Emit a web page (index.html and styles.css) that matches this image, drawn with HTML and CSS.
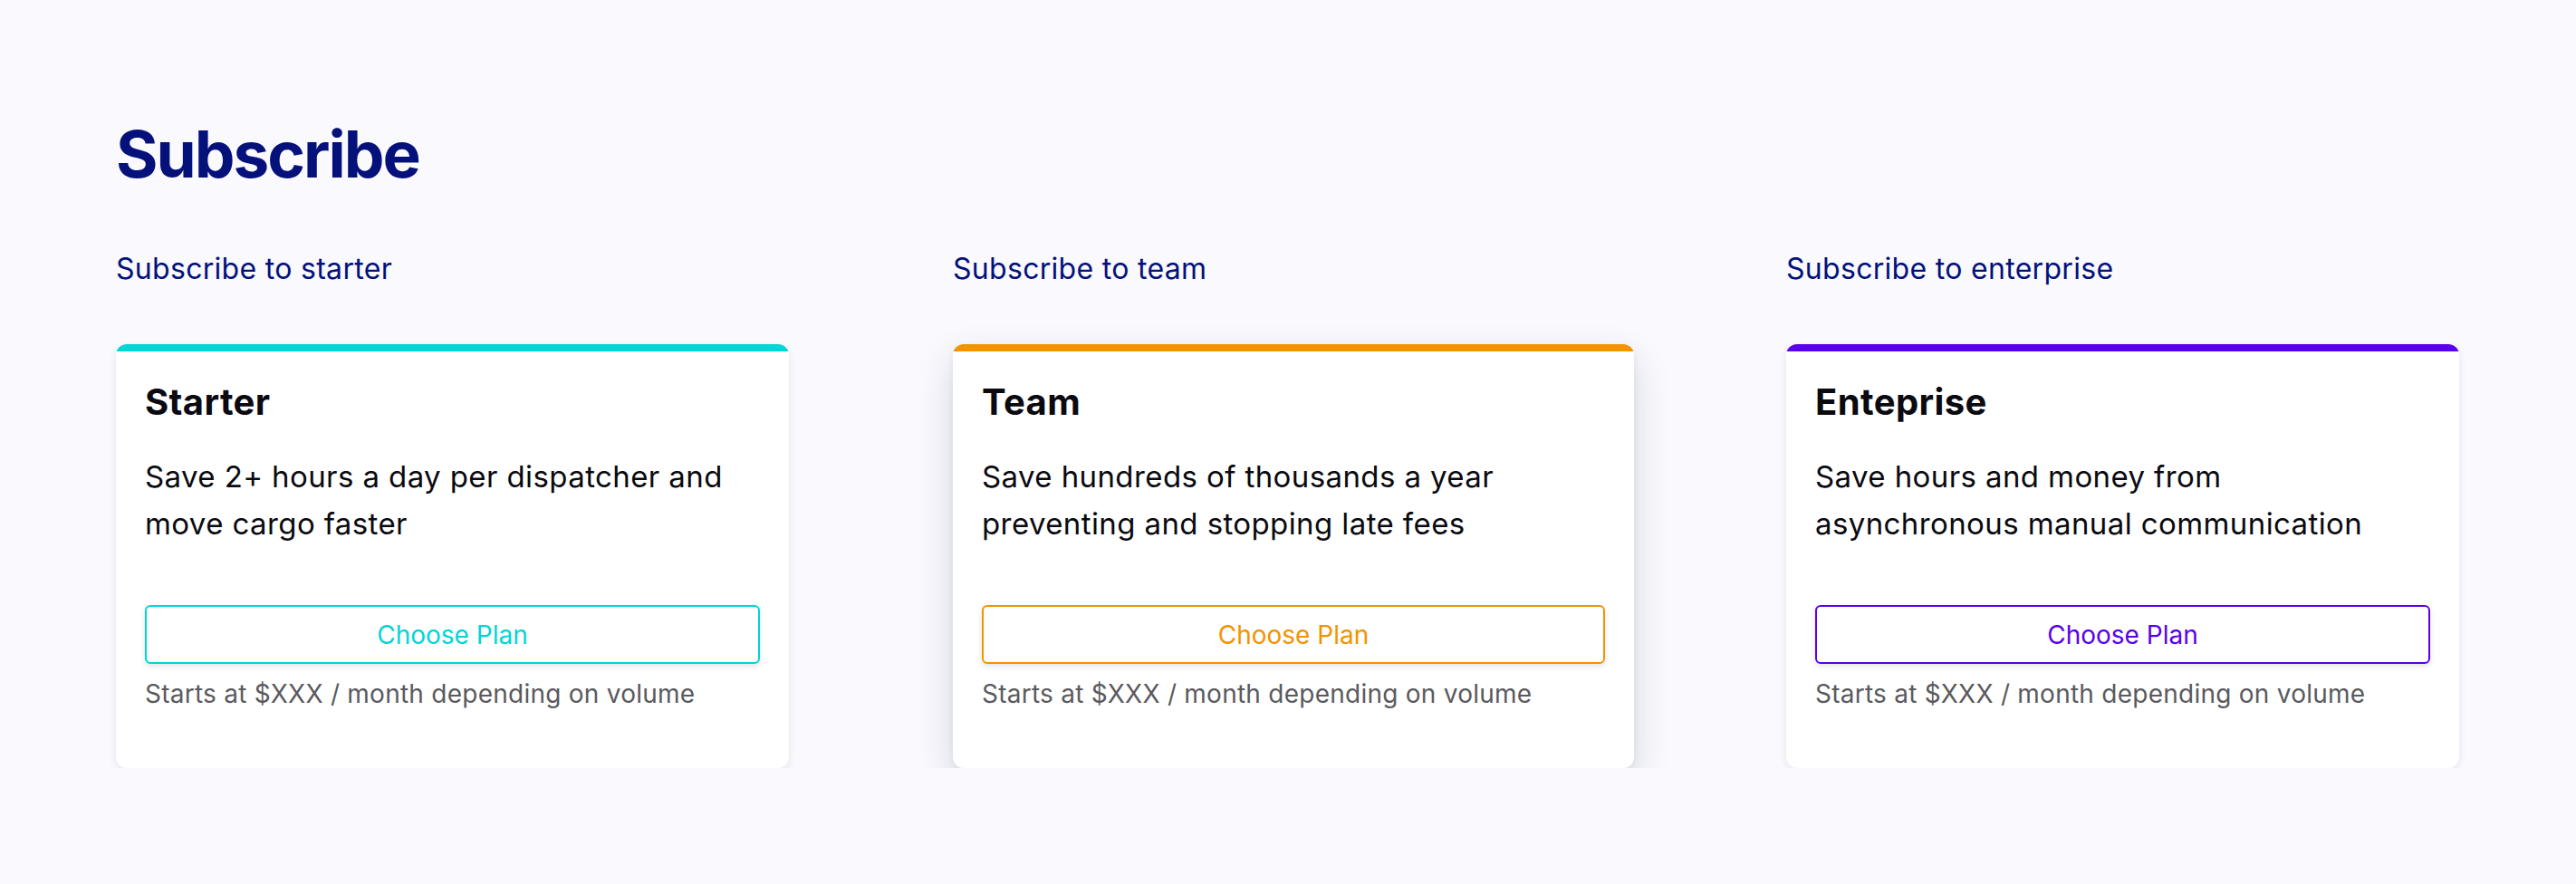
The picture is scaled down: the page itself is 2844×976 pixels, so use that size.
FILE: index.html
```html
<!DOCTYPE html>
<html lang="en">
<head>
<meta charset="utf-8">
<title>Subscribe</title>
<link rel="stylesheet" href="styles.css">
</head>
<body>
<main class="page">
  <h1 class="title">Subscribe</h1>
  <div class="plans">
    <section class="plan plan-starter">
      <h2 class="plan-label">Subscribe to starter</h2>
      <div class="card">
        <div class="card-bar"></div>
        <div class="card-body">
          <h3 class="card-title">Starter</h3>
          <p class="card-text">Save 2+ hours a day per dispatcher and move cargo faster</p>
          <button class="card-btn">Choose Plan</button>
          <p class="card-note">Starts at $XXX / month depending on volume</p>
        </div>
      </div>
    </section>
    <section class="plan plan-team">
      <h2 class="plan-label">Subscribe to team</h2>
      <div class="card card-raised">
        <div class="card-bar"></div>
        <div class="card-body">
          <h3 class="card-title">Team</h3>
          <p class="card-text">Save hundreds of thousands a year preventing and stopping late fees</p>
          <button class="card-btn">Choose Plan</button>
          <p class="card-note">Starts at $XXX / month depending on volume</p>
        </div>
      </div>
    </section>
    <section class="plan plan-enterprise">
      <h2 class="plan-label">Subscribe to enterprise</h2>
      <div class="card">
        <div class="card-bar"></div>
        <div class="card-body">
          <h3 class="card-title">Enteprise</h3>
          <p class="card-text">Save hours and money from asynchronous manual communication</p>
          <button class="card-btn">Choose Plan</button>
          <p class="card-note">Starts at $XXX / month depending on volume</p>
        </div>
      </div>
    </section>
  </div>
</main>
</body>
</html>
```

FILE: styles.css
```css
* { box-sizing: border-box; }

html, body {
  margin: 0;
  padding: 0;
  background: #f9f9fe;
  font-family: "Inter", "Noto Sans", "Liberation Sans", sans-serif;
}

.page {
  padding: 127px 0 0 128px;
}

.title {
  margin: 0;
  font-size: 71px;
  line-height: 86px;
  font-weight: 700;
  color: #04117a;
  letter-spacing: -2px;
}

.plans {
  display: flex;
  align-items: flex-start;
  margin-top: 66px;
}

.plan { flex: none; }
.plan-starter { width: 743px; }
.plan-team { width: 752px; margin-left: 181px; }
.plan-enterprise { width: 743px; margin-left: 168px; }

.plan-label {
  margin: 0 0 65px;
  font-size: 32px;
  line-height: 36px;
  font-weight: 400;
  color: #04117a;
  letter-spacing: 0.3px;
}

.card {
  --accent: #00d6d6;
  background: #ffffff;
  border-radius: 12px;
  overflow: hidden;
  box-shadow: 0 3px 8px rgba(40, 40, 80, 0.10);
}

.plan-team .card { --accent: #f39300; }
.plan-enterprise .card { --accent: #5a00ee; }

.card-raised {
  box-shadow: 0 16px 40px rgba(40, 40, 80, 0.16), 0 3px 8px rgba(40, 40, 80, 0.06);
}

.card-bar {
  height: 8px;
  background: var(--accent);
}

.card-body {
  padding: 32px 32px 62px;
  display: flex;
  flex-direction: column;
}

.card-title {
  margin: 0;
  font-size: 40px;
  line-height: 48px;
  font-weight: 700;
  color: #0a0a10;
  letter-spacing: 0.4px;
}

.card-text {
  margin: 32px 0 0;
  font-size: 33px;
  line-height: 52px;
  font-weight: 400;
  color: #0a0a10;
  letter-spacing: 0.4px;
}

.card-btn {
  margin-top: 64px;
  height: 65px;
  width: 100%;
  border: 2px solid var(--accent);
  border-radius: 6px;
  background: #ffffff;
  color: var(--accent);
  font-family: inherit;
  font-size: 28px;
  font-weight: 400;
  box-shadow: 0 3px 6px rgba(40, 40, 80, 0.12);
  cursor: pointer;
}

.card-note {
  margin: 13px 0 0;
  font-size: 28px;
  line-height: 40px;
  color: #5a5a5e;
  letter-spacing: 0.25px;
}
```
